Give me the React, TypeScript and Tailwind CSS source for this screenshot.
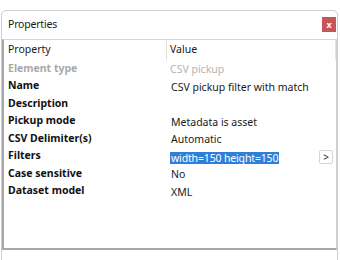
const rows: { label: string; value: string; muted?: boolean; selected?: boolean }[] = [
  { label: "Element type", value: "CSV pickup", muted: true },
  { label: "Name", value: "CSV pickup filter with match" },
  { label: "Description", value: "" },
  { label: "Pickup mode", value: "Metadata is asset" },
  { label: "CSV Delimiter(s)", value: "Automatic" },
  { label: "Filters", value: "width=150 height=150", selected: true },
  { label: "Case sensitive", value: "No" },
  { label: "Dataset model", value: "XML" },
];

const App = () => {
  return (
    <div
      className="w-[340px] h-[260px] bg-white overflow-hidden pt-[10px] pl-[1px] pr-[2px] text-[#1a1a1a]"
      style={{ fontFamily: '"Noto Sans", "Open Sans", sans-serif' }}
    >
      <div className="h-[270px] border border-[#cfcfcf] rounded-t-[5px] flex flex-col">
        {/* title bar */}
        <div className="h-[28px] flex items-start justify-between pl-[6px] pr-[1px]">
          <span className="text-[10.5px] tracking-[-0.2px] leading-none mt-[8px]">Properties</span>
          <button className="mt-[6px] w-[14px] h-[15px] bg-[#c8545a] flex items-center justify-center text-white text-[9px] font-bold leading-none">
            x
          </button>
        </div>

        {/* property grid */}
        <div className="h-[211px] border-l-2 border-b-2 border-t border-r border-l-[#a8a8a8] border-b-[#a8a8a8] border-t-[#d8d8d8] border-r-[#d0d0d0] text-[10.5px]">
          <div className="h-[20px] flex items-center border-r border-[#e4e4e4]">
            <div className="w-[163px] h-full flex items-center pl-[4px] border-r border-[#e0e0e0]">Property</div>
            <div className="pl-[3px]">Value</div>
          </div>
          {rows.map((r) => (
            <div key={r.label} className="h-[17.5px] flex items-center">
              <div
                className={`w-[164px] pl-[4px] font-bold ${r.muted ? "text-[#a9a9a9]" : "text-[#111]"}`}
              >
                {r.label}
              </div>
              <div className="flex-1 flex items-center justify-between pl-[2px] pr-[3px] pt-[3px]">
                <span
                  className={
                    r.muted
                      ? "text-[#b4b4b4]"
                      : r.selected
                        ? "bg-[#2f7fd9] text-white px-[1px] leading-[12px] tracking-[-0.15px]"
                        : "text-[#1a1a1a] px-[1px]"
                  }
                >
                  {r.value}
                </span>
                {r.selected && (
                  <span className="w-[14px] h-[14px] border border-[#d4d4d4] rounded-[2px] bg-white flex items-center justify-center text-[10px] leading-none text-[#222] -mt-[2px]">
                    &gt;
                  </span>
                )}
              </div>
            </div>
          ))}
        </div>
      </div>
    </div>
  );
};

export default App;
